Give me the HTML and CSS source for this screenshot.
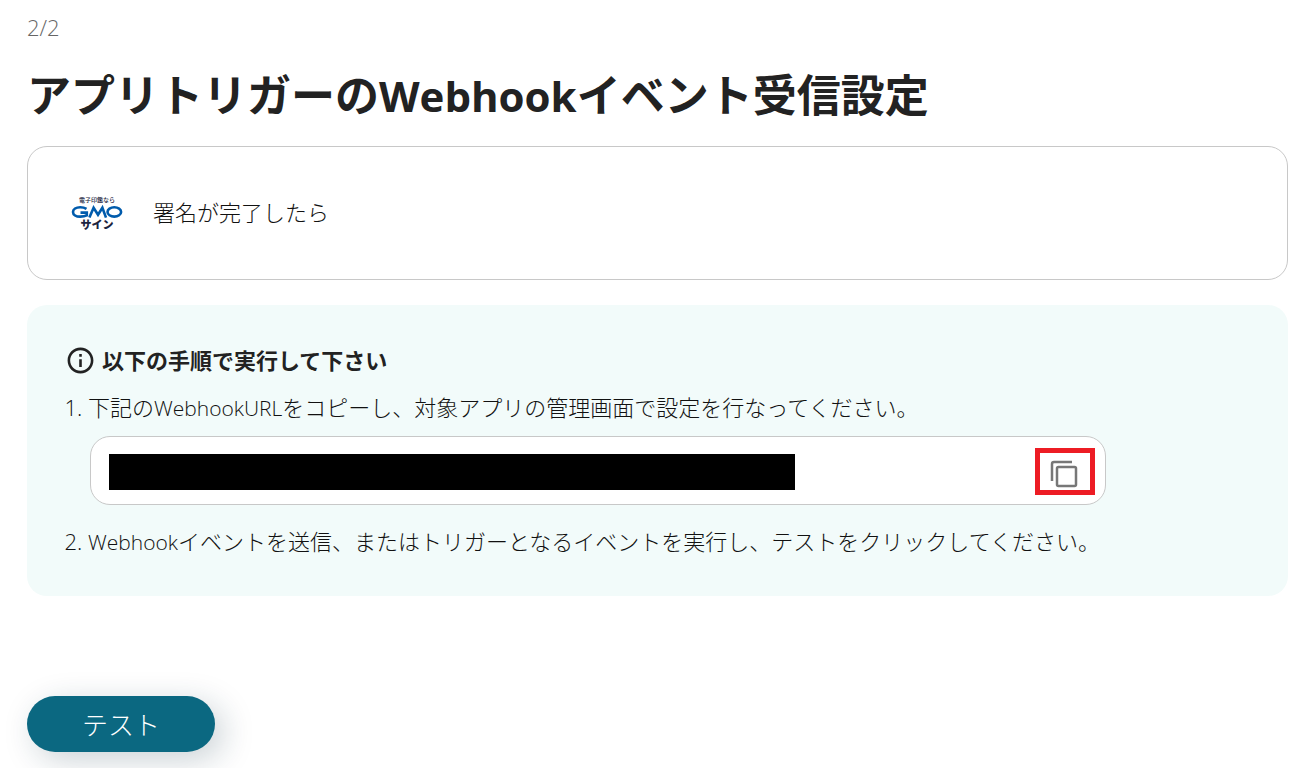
FILE: index.html
```html
<!DOCTYPE html>
<html lang="ja">
<head>
    <meta charset="UTF-8">
    <meta name="viewport" content="width=device-width, initial-scale=1.0">
    <title>アプリトリガーのWebhookイベント受信設定</title>
    <link rel="stylesheet" href="styles.css">
</head>
<body>
    <main class="page">
        <p class="step">2/2</p>
        <h1>アプリトリガーの<span class="latin">Webhook</span>イベント受信設定</h1>

        <section class="trigger-card">
            <svg class="app-logo" viewBox="0 0 52 44" role="img" aria-label="電子印鑑ならGMOサイン">
                <text class="logo-small" x="26" y="12" text-anchor="middle">電子印鑑なら</text>
                <g class="logo-gmo">
                    <path d="M15.500 18.800C13.500 17.600 11.500 17.200 9.200 17.200C5 17.200 2 19.100 2 21.900C2 24.700 5 26.600 9.200 26.600C12 26.600 14.200 26.200 15.800 25.400V22.600H9.500"/>
                    <path d="M18.400 27.600L22.600 17.800L27 24.800L31.400 17.800L35 27.600"/>
                    <ellipse cx="43.300" cy="21.900" rx="6.800" ry="4.700"/>
                </g>
                <text class="logo-sign" x="26" y="39" text-anchor="middle">サイン</text>
            </svg>
            <span>署名が完了したら</span>
        </section>

        <section class="guide">
            <h2>
                <svg class="info-icon" viewBox="0 0 24 24" aria-hidden="true">
                    <path d="M11 7h2v2h-2zm0 4h2v6h-2zm1-9C6.480 2 2 6.480 2 12s4.480 10 10 10 10-4.480 10-10S17.520 2 12 2zm0 18c-4.410 0-8-3.590-8-8s3.590-8 8-8 8 3.590 8 8-3.590 8-8 8z"/>
                </svg>
                以下の手順で実行して下さい
            </h2>
            <ol>
                <li>
                    下記の<span class="latin">WebhookURL</span>をコピーし、対象アプリの管理画面で設定を行なってください。
                    <div class="url-box">
                        <input class="url-field" type="text" aria-label="WebhookURL" readonly>
                        <button class="copy-btn" type="button" aria-label="コピー">
                            <svg viewBox="0 0 28 28" aria-hidden="true">
                                <path d="M2 21V4Q2 2 4 2H22"/>
                                <rect x="7" y="7" width="19" height="19" rx="1.500"/>
                            </svg>
                        </button>
                    </div>
                </li>
                <li><span class="latin">Webhook</span>イベントを送信、またはトリガーとなるイベントを実行し、テストをクリックしてください。</li>
            </ol>
        </section>

        <button class="test-btn" type="button">テスト</button>
    </main>
</body>
</html>
```

FILE: styles.css
```css
* {
    box-sizing: border-box;
}

body {
    margin: 0;
    font-family: "Open Sans", "Noto Sans CJK JP", sans-serif;
    font-size: 22px;
    font-weight: 300;
    line-height: 32px;
    color: #111;
    background: #fff;
}

.page {
    padding: 11px 13px 16px 27px;
}

.step {
    margin: 0;
    color: #666;
}

h1 {
    margin: 20px 0 19px;
    font-size: 44px;
    font-weight: 700;
    line-height: 64px;
    color: #222;
}

/* Latin words run a little smaller than the Japanese around them */
.latin {
    font-size: 21px;
    line-height: 1;
}

h1 .latin {
    font-size: 42px;
}

.trigger-card {
    display: flex;
    align-items: center;
    gap: 30px;
    min-height: 134px;
    padding: 0 43px 2px;
    border: 1px solid #c8c8c8;
    border-radius: 20px;
}

.app-logo {
    width: 52px;
    height: 44px;
}

.logo-small {
    font-size: 6px;
    font-weight: 500;
    fill: #1b2440;
}

.logo-sign {
    font-size: 11px;
    font-weight: 900;
    fill: #1b2440;
}

.logo-gmo {
    fill: none;
    stroke: #005bac;
    stroke-width: 2.6;
}

.guide {
    margin-top: 25px;
    padding: 39px 40px;
    background: #f2fbfa;
    border-radius: 20px;
}

.guide h2 {
    display: flex;
    align-items: center;
    gap: 6px;
    margin: 0 0 15px -2px;
    font-size: 22px;
    font-weight: 700;
    line-height: 32px;
    color: #222;
}

.info-icon {
    width: 31px;
    height: 31px;
    fill: #222;
}

.guide ol {
    margin: 0;
    padding-left: 21px;
}

.url-box {
    display: flex;
    align-items: center;
    margin: 13px 142px 20px 2px;
    padding: 11px 10px 9px 18px;
    background: #fff;
    border: 1px solid #c8c8c8;
    border-radius: 20px;
}

.url-field {
    flex: 1;
    min-width: 0;
    height: 36px;
    margin-right: 240px;
    padding: 0;
    border: 0;
    background: #000;
    color: #000;
}

.copy-btn {
    display: flex;
    align-items: center;
    justify-content: center;
    width: 60px;
    height: 47px;
    padding: 4px 2px 0 0;
    background: #fff;
    border: 5px solid #ed1c24;
    cursor: pointer;
}

.copy-btn svg {
    width: 28px;
    height: 28px;
    fill: none;
    stroke: #777;
    stroke-width: 2.5;
}

.test-btn {
    display: block;
    min-width: 188px;
    height: 56px;
    margin-top: 100px;
    padding: 0 40px;
    border: 0;
    border-radius: 28px;
    background: #0b6881;
    box-shadow: 8px 8px 32px rgba(20, 50, 70, 0.22);
    color: #fff;
    font-family: inherit;
    font-size: 26px;
    font-weight: 300;
    cursor: pointer;
}
```
